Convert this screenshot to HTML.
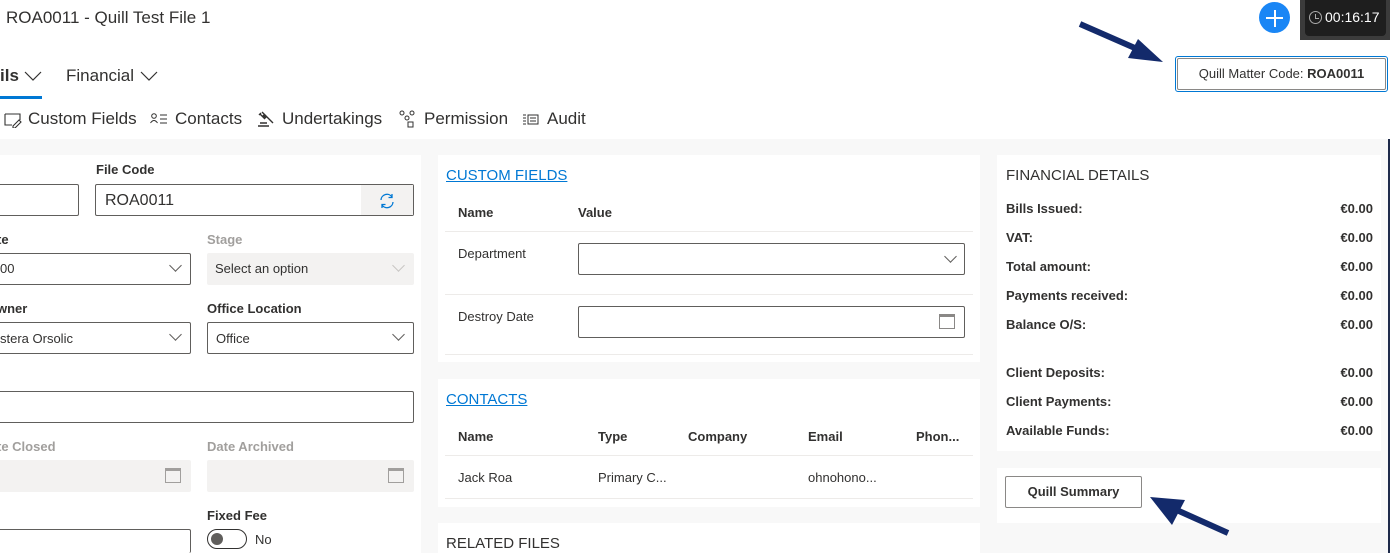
<!DOCTYPE html>
<html><head><meta charset="utf-8"><style>
*{box-sizing:border-box;margin:0;padding:0}
html,body{width:1390px;height:553px;overflow:hidden}
body{position:relative;background:#fff;font-family:"Liberation Sans",sans-serif;color:#323130}
.a{position:absolute;white-space:nowrap}
.lbl{font-size:13px;font-weight:bold;color:#323130}
.dis{color:#a19f9d}
.in{position:absolute;border:1px solid #605e5c;border-radius:2px;background:#fff}
.din{position:absolute;background:#f3f2f1;border-radius:2px}
.t{font-size:13px;color:#323130}
.card{position:absolute;background:#fff}
.hr{position:absolute;height:1px;background:#edebe9}
.chev{position:absolute;width:9px;height:9px;border-right:1px solid #605e5c;border-bottom:1px solid #605e5c;transform:rotate(45deg)}
.sec{font-size:15px;color:#323130;font-weight:300}
.link{color:#0078d4;text-decoration:underline}
.fr{position:absolute;left:1006px;width:367px;font-size:13px;font-weight:bold;color:#323130}
.fr span{position:absolute;right:0}
.nv{position:absolute;top:109px;font-size:17px;color:#323130;white-space:nowrap}
.ic{position:absolute}
</style></head><body>
<div class="a" style="left:6px;top:8px;font-size:17px;color:#323130">ROA0011 - Quill Test File 1</div>
<div class="a" style="left:1259px;top:2px;width:31px;height:31px;border-radius:50%;background:#1a86f5"></div>
<div class="a" style="left:1266px;top:17px;width:17px;height:2px;background:#fff"></div>
<div class="a" style="left:1273.5px;top:10px;width:2px;height:17px;background:#fff"></div>
<div class="a" style="left:1300px;top:0;width:90px;height:40px;background:#3b3b3b"></div>
<div class="a" style="left:1305px;top:0;width:81px;height:36px;background:#1e1e1e;border-radius:0 0 4px 4px"></div>
<div class="a" style="left:1309px;top:11px;width:13px;height:13px;border:1.5px solid #aaa;border-radius:50%"></div>
<div class="a" style="left:1315px;top:14px;width:4px;height:5px;border-left:1.5px solid #aaa;border-bottom:1.5px solid #aaa"></div>
<div class="a" style="left:1325px;top:9px;font-size:14px;color:#fff">00:16:17</div>

<svg class="a" style="left:1070px;top:15px" width="110" height="55"><line x1="10" y1="9" x2="74" y2="37" stroke="#132a6b" stroke-width="6"/><polygon points="93,47 68,24 58,43" fill="#132a6b"/></svg>
<div class="a" style="left:1175px;top:56px;width:213px;height:36px;border:1px solid #0078d4;border-radius:3px"></div>
<div class="a" style="left:1177px;top:58px;width:209px;height:32px;border:1px solid #8a8886;border-radius:2px;font-size:13px;text-align:center;line-height:30px">Quill Matter Code: <b>ROA0011</b></div>

<div class="a" style="left:0;top:66px;font-size:17px;font-weight:600">ils</div>
<svg class="a" style="left:24px;top:70px" width="18" height="12"><path d="M1 2 L9 10 L17 2" fill="none" stroke="#323130" stroke-width="1.2"/></svg>
<div class="a" style="left:0;top:96px;width:42px;height:3px;background:#0078d4"></div>
<div class="a" style="left:66px;top:66px;font-size:17px">Financial</div>
<svg class="a" style="left:140px;top:70px" width="18" height="12"><path d="M1 2 L9 10 L17 2" fill="none" stroke="#323130" stroke-width="1.2"/></svg>

<svg class="ic" style="left:4px;top:112px" width="18" height="16"><path d="M1 2 H16 V8 M1 2 V13 H8 M9 14 L15 8 L17 10 L11 16 H9 Z" fill="none" stroke="#323130" stroke-width="1.1"/></svg>
<div class="nv" style="left:28px">Custom Fields</div>
<svg class="ic" style="left:150px;top:113px" width="18" height="12"><circle cx="4" cy="3" r="2.3" fill="none" stroke="#323130"/><path d="M0.5 10 Q4 5 7.5 10 M10 2 H17 M10 6 H17 M10 10 H17" fill="none" stroke="#323130"/></svg>
<div class="nv" style="left:175px">Contacts</div>
<svg class="ic" style="left:257px;top:110px" width="18" height="18"><path d="M5 2 L10 7 M3 4 L8 9 M4 3 L2 5 M9 8 L6 5 M8 5 L16 13 M1 16 H12 M3 13 H10" fill="none" stroke="#323130" stroke-width="1.4"/></svg>
<div class="nv" style="left:282px">Undertakings</div>
<svg class="ic" style="left:399px;top:110px" width="18" height="18"><circle cx="3" cy="3" r="2" fill="none" stroke="#323130"/><circle cx="13" cy="3" r="2" fill="none" stroke="#323130"/><circle cx="8" cy="8" r="2" fill="none" stroke="#323130"/><rect x="9" y="12" width="5" height="5" fill="none" stroke="#323130"/></svg>
<div class="nv" style="left:424px">Permission</div>
<svg class="ic" style="left:522px;top:114px" width="18" height="12"><path d="M1 1 H4 M1 4 H4 M1 7 H4 M1 10 H4" stroke="#323130"/><rect x="6" y="1" width="10" height="9" fill="none" stroke="#323130"/><path d="M8 4 H14 M8 7 H14" stroke="#323130"/></svg>
<div class="nv" style="left:547px">Audit</div>

<div class="a" style="left:0;top:139px;width:1390px;height:414px;background:#f8f8f8"></div>
<div class="a" style="left:1388px;top:139px;width:2px;height:414px;background:#1e2a4a"></div>

<!-- left card -->
<div class="card" style="left:0;top:155px;width:421px;height:398px"></div>
<div class="a lbl" style="left:96px;top:162px">File Code</div>
<div class="in" style="left:-5px;top:184px;width:84px;height:32px"></div>
<div class="in" style="left:95px;top:184px;width:319px;height:32px"></div>
<div class="a" style="left:361px;top:185px;width:52px;height:30px;background:#f3f2f1"></div>
<svg class="a" style="left:378px;top:192px" width="18" height="18" viewBox="0 0 18 18"><path d="M3 8 A6 6 0 0 1 14 5 M15 10 A6 6 0 0 1 4 13" fill="none" stroke="#0078d4" stroke-width="1.3"/><path d="M14 2 V5.5 H10.5 M4 16 V12.5 H7.5" fill="none" stroke="#0078d4" stroke-width="1.3"/></svg>
<div class="a" style="left:105px;top:192px;font-size:16px">ROA0011</div>

<div class="a lbl" style="left:-3px;top:232px">te</div>
<div class="a lbl dis" style="left:207px;top:232px">Stage</div>
<div class="in" style="left:-5px;top:253px;width:196px;height:32px"></div>
<div class="a t" style="left:0;top:261px">00</div><div class="chev" style="left:171px;top:261px"></div>
<div class="din" style="left:207px;top:253px;width:207px;height:32px"></div>
<div class="a t dis" style="left:215px;top:261px">Select an option</div><div class="chev" style="left:394px;top:261px;border-color:#c8c6c4"></div>

<div class="a lbl" style="left:-3px;top:301px">wner</div>
<div class="a lbl" style="left:207px;top:301px">Office Location</div>
<div class="in" style="left:-5px;top:322px;width:196px;height:32px"></div>
<div class="a t" style="left:0;top:331px">stera Orsolic</div><div class="chev" style="left:171px;top:330px"></div>
<div class="in" style="left:207px;top:322px;width:207px;height:32px"></div>
<div class="a t" style="left:216px;top:331px">Office</div><div class="chev" style="left:394px;top:330px"></div>

<div class="in" style="left:-5px;top:391px;width:419px;height:32px"></div>

<div class="a lbl dis" style="left:-3px;top:439px">te Closed</div>
<div class="a lbl dis" style="left:207px;top:439px">Date Archived</div>
<div class="din" style="left:-5px;top:460px;width:196px;height:32px"></div>
<div class="din" style="left:207px;top:460px;width:207px;height:32px"></div>
<div class="a" style="left:165px;top:468px;width:16px;height:15px;border:1px solid #a19f9d;border-top-width:3px"></div>
<div class="a" style="left:388px;top:468px;width:16px;height:15px;border:1px solid #a19f9d;border-top-width:3px"></div>

<div class="a lbl" style="left:207px;top:508px">Fixed Fee</div>
<div class="a" style="left:207px;top:529px;width:40px;height:20px;border:1px solid #323130;border-radius:10px"></div>
<div class="a" style="left:211px;top:533px;width:12px;height:12px;border-radius:50%;background:#605e5c"></div>
<div class="a t" style="left:255px;top:532px">No</div>
<div class="in" style="left:-5px;top:529px;width:196px;height:24px;border-bottom:none"></div>

<!-- middle -->
<div class="card" style="left:438px;top:155px;width:542px;height:207px"></div>
<div class="a sec link" style="left:446px;top:167px">CUSTOM FIELDS</div>
<div class="a lbl" style="left:458px;top:205px">Name</div>
<div class="a lbl" style="left:578px;top:205px">Value</div>
<div class="hr" style="left:445px;top:231px;width:528px"></div>
<div class="a t" style="left:458px;top:246px">Department</div>
<div class="in" style="left:578px;top:243px;width:387px;height:32px"></div><div class="chev" style="left:946px;top:252px"></div>
<div class="hr" style="left:445px;top:294px;width:528px"></div>
<div class="a t" style="left:458px;top:309px">Destroy Date</div>
<div class="in" style="left:578px;top:306px;width:387px;height:32px"></div>
<div class="a" style="left:939px;top:314px;width:16px;height:15px;border:1px solid #8a8886;border-top-width:3px"></div>
<div class="hr" style="left:445px;top:354px;width:528px"></div>

<div class="card" style="left:438px;top:379px;width:542px;height:128px"></div>
<div class="a sec link" style="left:446px;top:391px">CONTACTS</div>
<div class="a lbl" style="left:458px;top:429px">Name</div>
<div class="a lbl" style="left:598px;top:429px">Type</div>
<div class="a lbl" style="left:688px;top:429px">Company</div>
<div class="a lbl" style="left:808px;top:429px">Email</div>
<div class="a lbl" style="left:916px;top:429px">Phon...</div>
<div class="hr" style="left:445px;top:455px;width:528px"></div>
<div class="a t" style="left:458px;top:470px">Jack Roa</div>
<div class="a t" style="left:598px;top:470px">Primary C...</div>
<div class="a t" style="left:808px;top:470px">ohnohono...</div>
<div class="hr" style="left:445px;top:498px;width:528px"></div>

<div class="card" style="left:438px;top:523px;width:542px;height:30px"></div>
<div class="a sec" style="left:446px;top:535px">RELATED FILES</div>

<!-- right -->
<div class="card" style="left:997px;top:155px;width:384px;height:296px"></div>
<div class="a sec" style="left:1006px;top:167px">FINANCIAL DETAILS</div>
<div class="fr" style="top:201px">Bills Issued:<span>€0.00</span></div>
<div class="fr" style="top:230px">VAT:<span>€0.00</span></div>
<div class="fr" style="top:259px">Total amount:<span>€0.00</span></div>
<div class="fr" style="top:288px">Payments received:<span>€0.00</span></div>
<div class="fr" style="top:317px">Balance O/S:<span>€0.00</span></div>
<div class="fr" style="top:365px">Client Deposits:<span>€0.00</span></div>
<div class="fr" style="top:394px">Client Payments:<span>€0.00</span></div>
<div class="fr" style="top:423px">Available Funds:<span>€0.00</span></div>

<div class="card" style="left:997px;top:468px;width:384px;height:55px"></div>
<div class="a" style="left:1005px;top:476px;width:137px;height:32px;border:1px solid #8a8886;border-radius:2px;font-size:13px;font-weight:bold;text-align:center;line-height:30px">Quill Summary</div>
<svg class="a" style="left:1145px;top:488px" width="95" height="50"><line x1="83" y1="45" x2="25" y2="19" stroke="#132a6b" stroke-width="6"/><polygon points="5,9 40,12 27,37" fill="#132a6b"/></svg>
</body></html>
